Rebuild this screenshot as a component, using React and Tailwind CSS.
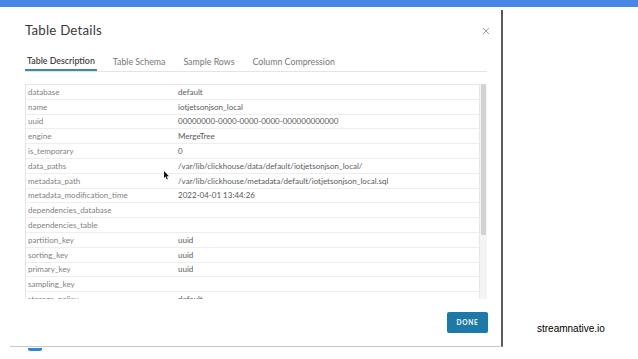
import React from "react";

const rows = [
  ["database", "default"],
  ["name", "iotjetsonjson_local"],
  ["uuid", "00000000-0000-0000-0000-000000000000"],
  ["engine", "MergeTree"],
  ["is_temporary", "0"],
  ["data_paths", "/var/lib/clickhouse/data/default/iotjetsonjson_local/"],
  ["metadata_path", "/var/lib/clickhouse/metadata/default/iotjetsonjson_local.sql"],
  ["metadata_modification_time", "2022-04-01 13:44:26"],
  ["dependencies_database", ""],
  ["dependencies_table", ""],
  ["partition_key", "uuid"],
  ["sorting_key", "uuid"],
  ["primary_key", "uuid"],
  ["sampling_key", ""],
  ["storage_policy", "default"],
];

const tabs = ["Table Description", "Table Schema", "Sample Rows", "Column Compression"];

export default function App() {
  return (
    <div className="relative w-[638px] h-[359px] bg-white overflow-hidden flex flex-col font-['Lato',sans-serif]">
      {/* top bar */}
      <div className="h-[7px] bg-[#4a86e8] shrink-0" />

      <div className="flex mt-[3px]">
        {/* modal */}
        <div className="ml-[10px] w-[493px] h-[337px] border-r-2 border-b border-r-[#5a5a5a] border-b-[#c8c8c8] flex flex-col pl-[15px] pr-[14px]">
          <div className="flex items-center justify-between mt-[13px] h-[16px]">
            <span className="text-[13.3px] text-[#3a3a3a] tracking-[0.2px]">Table Details</span>
            <svg width="8" height="8" viewBox="0 0 8 8" className="mr-[-3px]">
              <path d="M1 1L7 7M7 1L1 7" stroke="#a0a0a0" strokeWidth="1" />
            </svg>
          </div>

          {/* tabs */}
          <div className="flex mt-[14px] h-[19px] border-b border-[#e4e4e4] w-[462px]">
            {tabs.map((t, i) => (
              <div
                key={t}
                className={
                  i === 0
                    ? "h-full flex items-center px-[2px] mr-[16px] border-b-2 border-[#3d8aa6] mb-[-1px] text-[8.8px] font-semibold text-[#444]"
                    : "h-full flex items-center mr-[18px] text-[8.8px] text-[#777]"
                }
              >
                {t}
              </div>
            ))}
          </div>

          {/* table */}
          <div className="flex mt-[12px] h-[215px] w-[462px] overflow-hidden">
            <div className="w-[455px] border border-[#e6e6e6] border-b-0 flex flex-col">
              {rows.map(([k, v]) => (
                <div key={k} className="flex items-center h-[14.8px] shrink-0 border-b border-[#eeeeee]">
                  <span className="w-[152px] pl-[2px] text-[8px] text-[#7f7f7f] whitespace-nowrap">{k}</span>
                  <span className="text-[8px] text-[#5a5a5a] whitespace-nowrap">{v}</span>
                </div>
              ))}
            </div>
            <div className="w-[7px] bg-[#f4f4f4] flex flex-col">
              <div className="h-[151px] mx-[1px] bg-[#d2d2d2] rounded-[1px]" />
            </div>
          </div>

          {/* footer */}
          <div className="flex justify-end mt-[13px] w-[463px]">
            <button className="w-[41px] h-[21px] bg-[#1d79a8] rounded-[2px] text-white text-[6.5px] font-bold tracking-[0.8px]">
              DONE
            </button>
          </div>
        </div>

        <div className="flex-1 flex flex-col">
          <span className="mt-[311px] ml-[34px] text-[10px] text-black font-['Liberation_Sans',sans-serif]">
            streamnative.io
          </span>
        </div>
      </div>

      <div className="ml-[28px] mt-[1px] w-[14px] h-[3px] bg-[#2f86d4] rounded-b-[2px]" />

      {/* mouse cursor */}
      <svg className="absolute left-[164px] top-[171px]" width="6" height="9" viewBox="0 0 6 9">
        <path d="M0 0L0 7L1.6 5.6L2.8 8.4L3.8 8L2.7 5.3L5 5.2Z" fill="#111" />
      </svg>
    </div>
  );
}
